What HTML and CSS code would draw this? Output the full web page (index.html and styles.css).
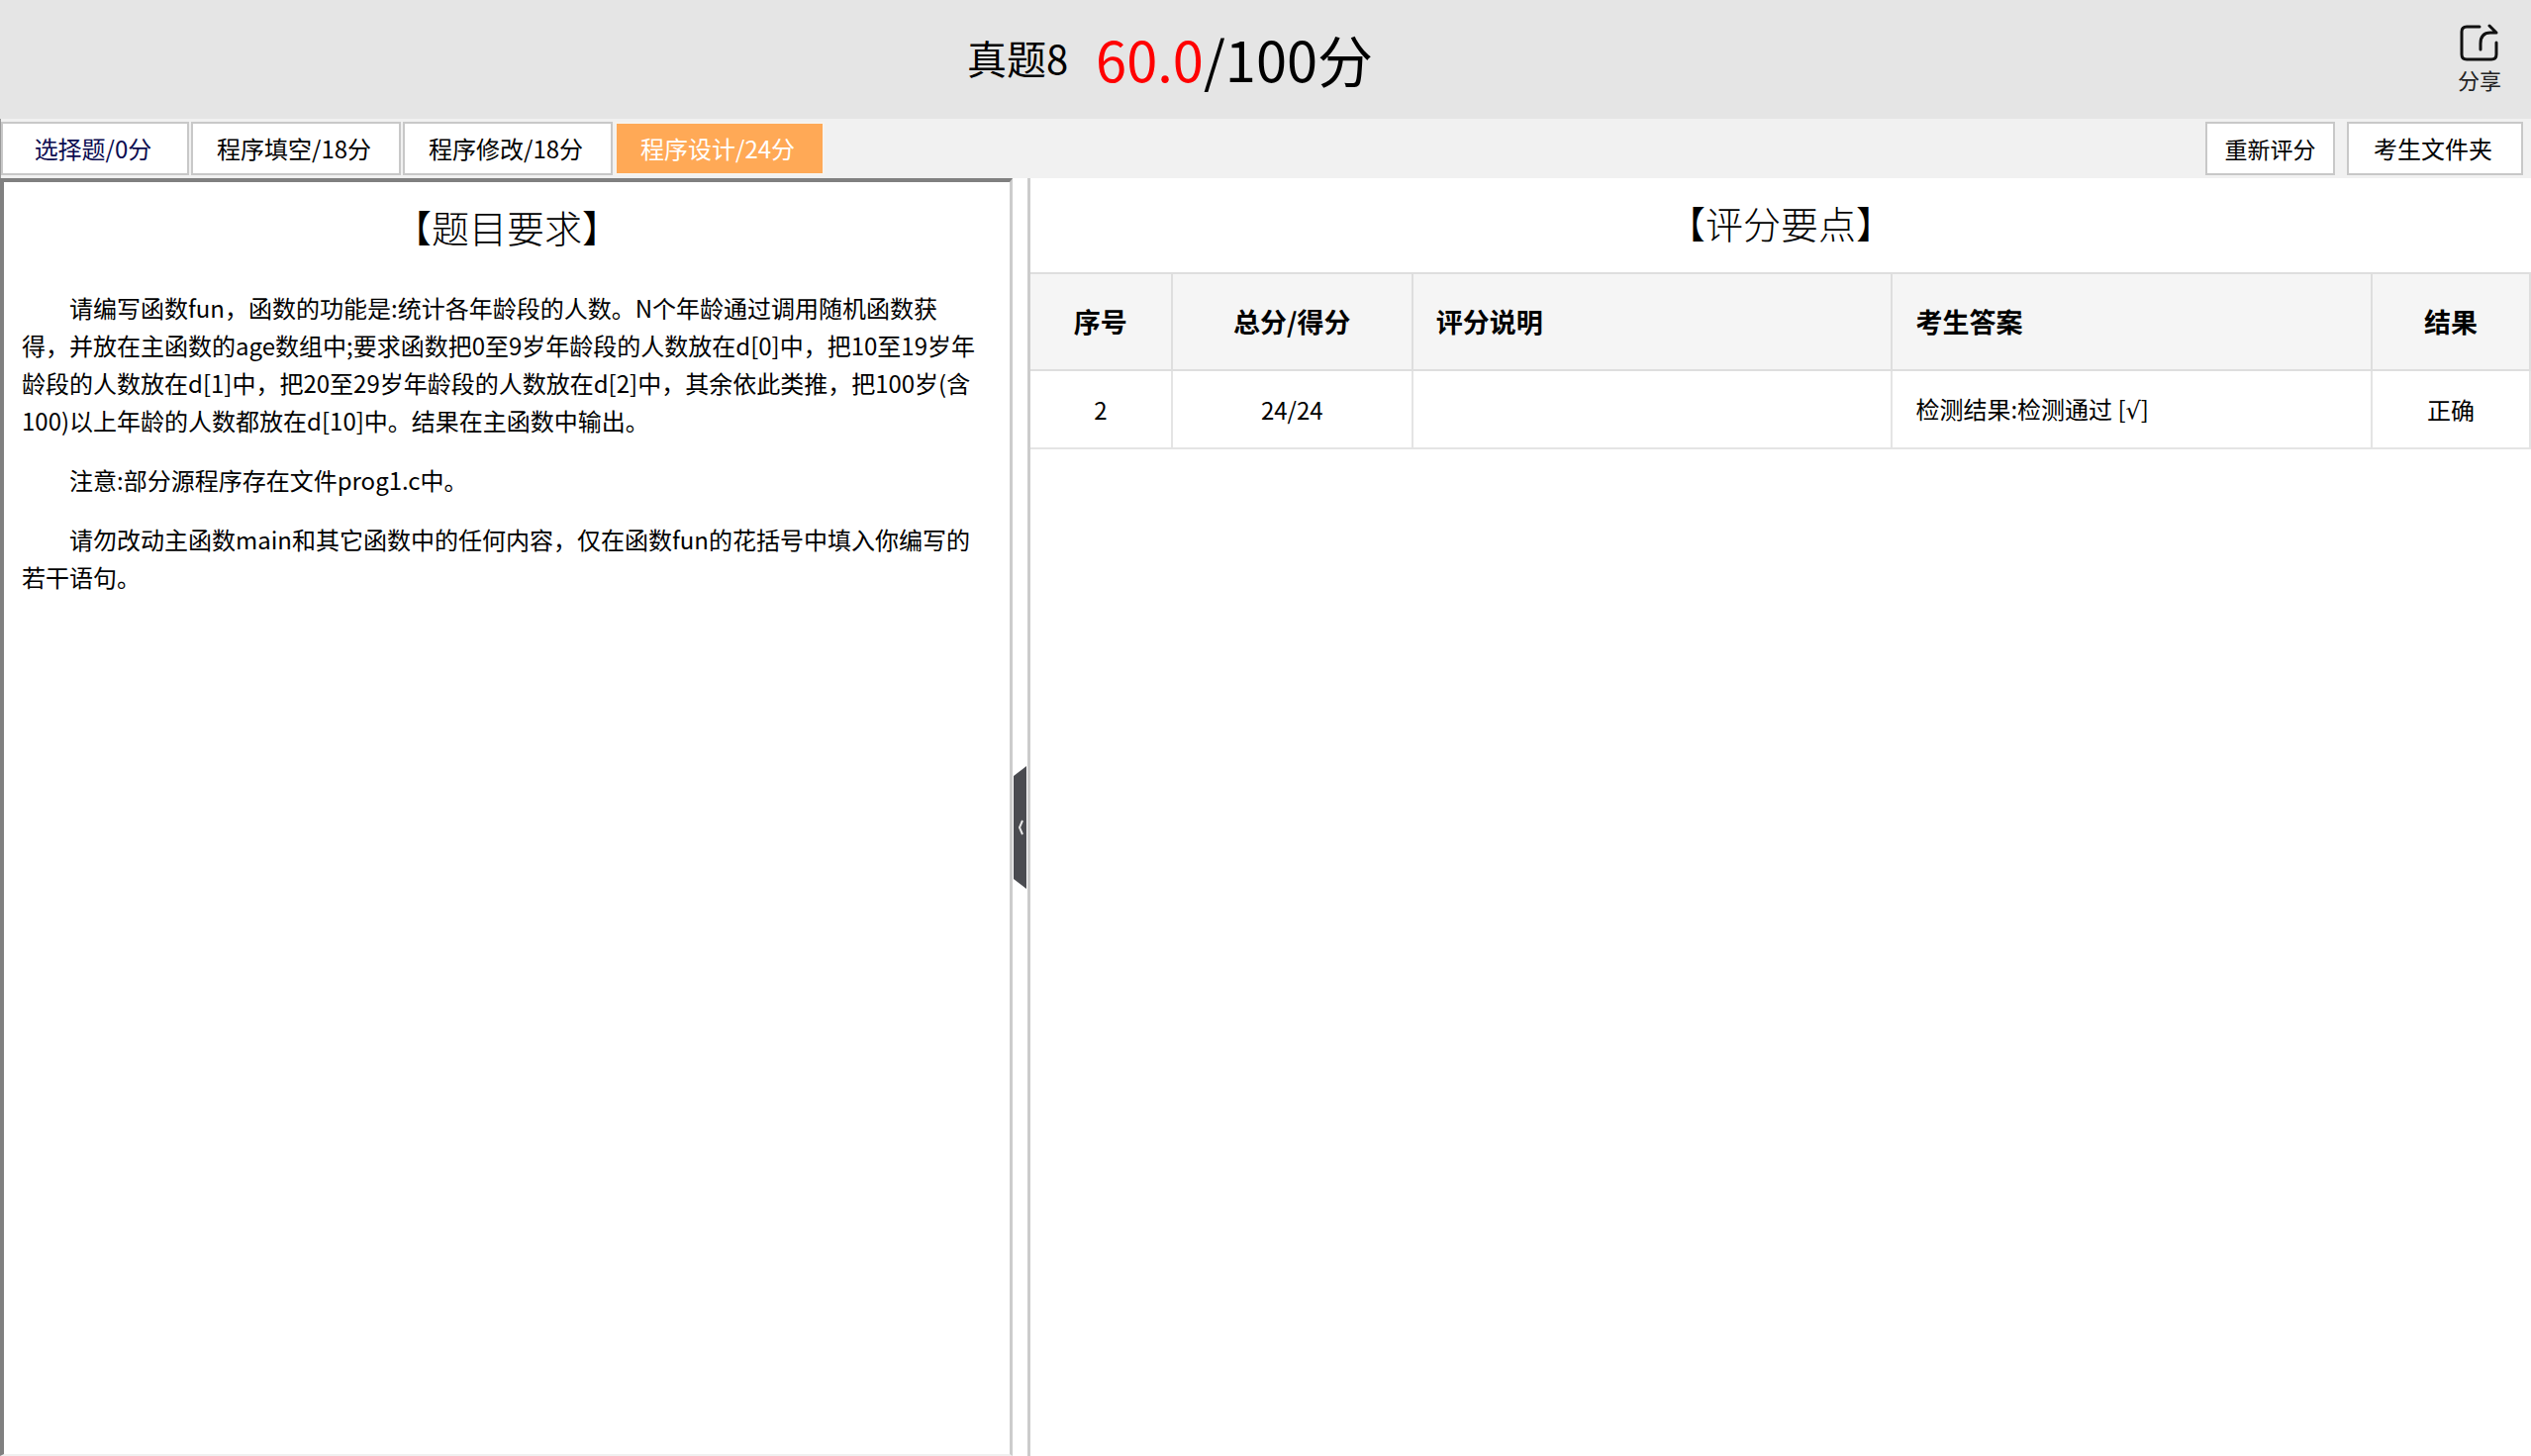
FILE: index.html
```html
<!DOCTYPE html>
<html lang="zh-CN">
<head>
<meta charset="utf-8">
<title>真题8</title>
<link rel="stylesheet" href="styles.css">
</head>
<body>
<header class="header">
  <div class="title">
    <h1 class="paper">真题8</h1>
    <p class="score"><span class="got">60.0</span>/100分</p>
  </div>
  <button class="share" type="button">
    <svg class="share-icon" viewBox="0 0 40 40" aria-hidden="true">
      <path d="M20 3H7Q2 3 2 8V31Q2 36 7 36H32Q37 36 37 31V19"/>
      <path d="M21 26V20Q21 9 31 9H37L30 2"/>
    </svg>
    分享
  </button>
</header>
<nav class="toolbar">
  <button class="tab visited" type="button">选择题/0分</button>
  <button class="tab" type="button">程序填空/18分</button>
  <button class="tab" type="button">程序修改/18分</button>
  <button class="tab active" type="button">程序设计/24分</button>
  <div class="actions">
    <button class="action rescore" type="button">重新评分</button>
    <button class="action folder" type="button">考生文件夹</button>
  </div>
</nav>
<main class="main">
  <section class="question">
    <h2 class="heading">【题目要求】</h2>
    <div class="text">
      <p>请编写函数fun，函数的功能是:统计各年龄段的人数。N个年龄通过调用随机函数获得，并放在主函数的age数组中;要求函数把0至9岁年龄段的人数放在d[0]中，把10至19岁年龄段的人数放在d[1]中，把20至29岁年龄段的人数放在d[2]中，其余依此类推，把100岁(含100)以上年龄的人数都放在d[10]中。结果在主函数中输出。</p>
      <p>注意:部分源程序存在文件prog1.c中。</p>
      <p>请勿改动主函数main和其它函数中的任何内容，仅在函数fun的花括号中填入你编写的若干语句。</p>
    </div>
  </section>
  <div class="divider">
    <button class="handle" type="button" aria-label="收起">
      <svg class="handle-shape" viewBox="0 0 13 124" aria-hidden="true">
        <path class="plate" d="M0 10L13 0V124L0 114Z"/>
        <path class="chevron" d="M9 55L6 62L9 69"/>
      </svg>
    </button>
  </div>
  <section class="points">
    <h2 class="heading">【评分要点】</h2>
    <table class="grades">
      <colgroup><col class="c-no"><col class="c-score"><col><col><col class="c-result"></colgroup>
      <thead>
        <tr><th class="mid">序号</th><th class="mid">总分/得分</th><th>评分说明</th><th>考生答案</th><th class="mid">结果</th></tr>
      </thead>
      <tbody>
        <tr><td class="mid">2</td><td class="mid">24/24</td><td></td><td>检测结果:检测通过 [<span class="check">√</span>]</td><td class="mid">正确</td></tr>
      </tbody>
    </table>
  </section>
</main>
</body>
</html>
```
FILE: styles.css
```css
* { box-sizing: border-box; }

body {
  margin: 0;
  min-height: 100vh;
  display: flex;
  flex-direction: column;
  background: #fff;
  color: #000;
  font: 24px/38px "Noto Sans CJK SC", sans-serif;
}

h1, h2, p { margin: 0; font-weight: 400; }

button {
  font: inherit;
  color: inherit;
  margin: 0;
  padding: 0;
  white-space: nowrap;
  cursor: pointer;
}

.header {
  display: flex;
  height: 120px;
  background: #e5e5e5;
}

.title {
  flex: 1;
  display: flex;
  align-items: center;
  justify-content: center;
  gap: 28px;
  padding-bottom: 2px;
  margin-right: 89px;
}

.paper { font-size: 40px; line-height: 56px; padding-bottom: 2px; }
.score { font-size: 56px; line-height: 80px; }
.got { color: #f00; }

.share {
  width: 104px;
  border: 0;
  background: none;
  display: flex;
  flex-direction: column;
  align-items: center;
  padding-top: 24px;
  font-size: 22px;
  line-height: 32px;
  color: #222;
}

.share-icon {
  width: 40px;
  height: 40px;
  fill: none;
  stroke: #111;
  stroke-width: 3;
  stroke-linecap: round;
  stroke-linejoin: round;
}

.toolbar {
  display: flex;
  align-items: center;
  gap: 2px;
  height: 60px;
  padding-right: 8px;
  border-left: 1px solid #999;
  background: #f1f1f1;
}

.tab, .action {
  height: 54px;
  border: 2px solid #c8c8c8;
  background: #fff;
  padding-right: 4px;
}

.tab { width: 212px; }
.tab.visited { width: 190px; color: #0b0b4f; }
.tab.active { border-color: #f6f3ee; background: #ffa956; background-clip: padding-box; color: #fff; }

.actions { display: flex; gap: 12px; margin-left: auto; }
.rescore { width: 131px; padding-right: 0; font-size: 23px; }
.folder { width: 178px; }

.main {
  flex: 1;
  display: grid;
  grid-template-columns: 40% 15px 1fr;
}

.question {
  border: 4px solid #808080;
  border-right: 3px solid #ccc;
  border-bottom: 2px solid #f0f0f0;
}

.heading {
  text-align: center;
  font-size: 38px;
  line-height: 56px;
  font-weight: 300;
}

.question .heading { padding-top: 17px; }

.text {
  display: grid;
  gap: 22px;
  padding: 35px 30px 0 18px;
}

.text p { text-indent: 2em; }

.divider {
  display: flex;
  align-items: center;
  justify-content: center;
  padding-top: 20px;
}

.handle { display: flex; border: 0; background: none; }
.handle-shape { width: 13px; height: 124px; }
.plate { fill: #4a4b50; }
.chevron { fill: none; stroke: #e8e8e8; stroke-width: 2; }

.points { border-left: 3px solid #ccc; }
.points .heading { padding: 17px 0 22px; }

.grades {
  width: 100%;
  table-layout: fixed;
  border-collapse: collapse;
}

.c-no { width: 143px; }
.c-score { width: 243px; }
.c-result { width: 160px; }

.grades th, .grades td {
  padding: 0 23px;
  border: 2px solid #e4e4e4;
  border-left: 0;
  text-align: left;
}

.grades th {
  height: 98px;
  background: #f5f5f5;
  border-color: #dedede;
  font-size: 27px;
  font-weight: 700;
}

.grades td { height: 79px; }
.grades .mid { text-align: center; }
.check { font-family: "DejaVu Sans", sans-serif; }
```
